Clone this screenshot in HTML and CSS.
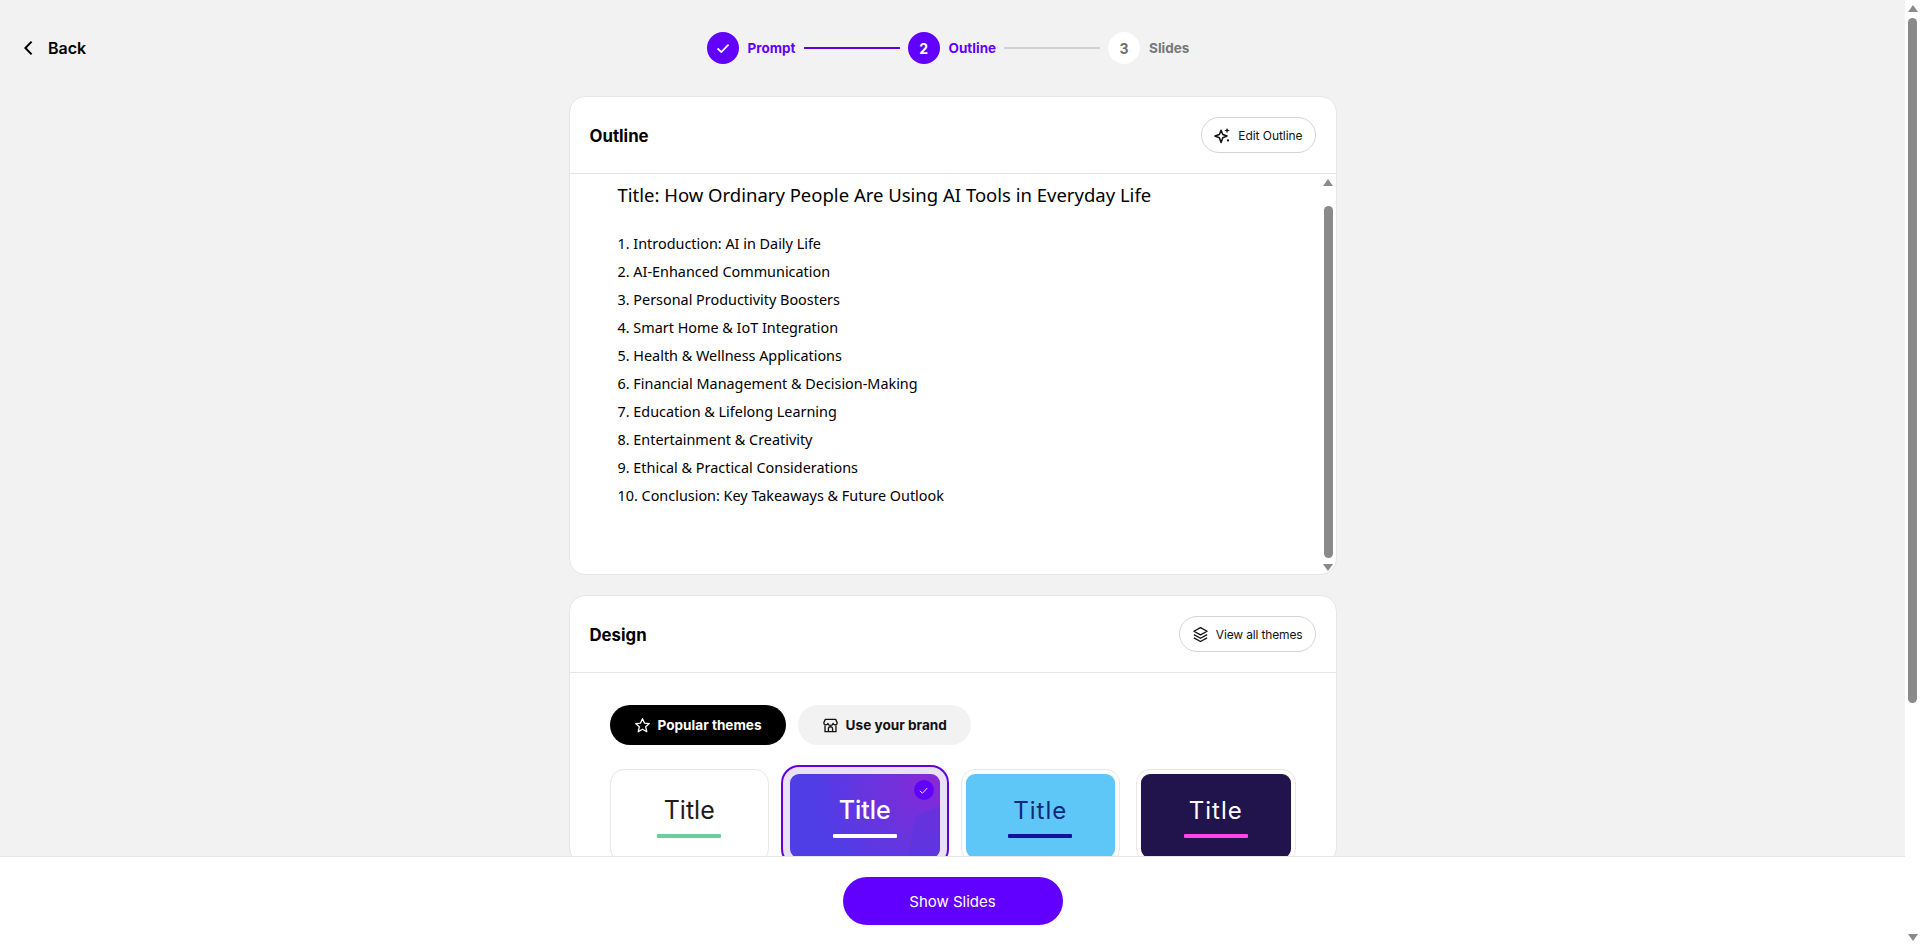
FILE: index.html
```html
<!DOCTYPE html>
<html lang="en">
<head>
<meta charset="utf-8">
<title>Outline</title>
<link rel="stylesheet" href="styles.css">
</head>
<body>
<div class="app">
  <div class="main">
    <div class="content">
      <header class="topbar">
        <a class="back">
          <svg class="back-icon" viewBox="0 0 12 16" width="12" height="16"><path d="M8.6 1.6 2.4 8l6.2 6.4" fill="none" stroke="#000" stroke-width="2"/></svg>
          <span>Back</span>
        </a>
        <nav class="stepper">
          <span class="step-dot done"><svg viewBox="0 0 16 16" width="16" height="16"><path d="M2.5 8.5 6.3 12 13.5 4.6" fill="none" stroke="#fff" stroke-width="1.7"/></svg></span>
          <span class="step-label active">Prompt</span>
          <span class="step-line active"></span>
          <span class="step-dot done">2</span>
          <span class="step-label active">Outline</span>
          <span class="step-line"></span>
          <span class="step-dot todo">3</span>
          <span class="step-label">Slides</span>
        </nav>
        <div></div>
      </header>

      <section class="card outline-card">
        <div class="card-head">
          <h2>Outline</h2>
          <button class="ghost-btn">
            <svg viewBox="0 0 18 18" width="17" height="17"><path d="M7.5 3.4 9.3 7.9 13.8 9.6 9.3 11.3 7.5 16.4 5.7 11.3 1 9.6 5.7 7.9Z" fill="none" stroke="#111" stroke-width="1.6" stroke-linejoin="round"/><path d="M13.8.8 14.6 3 16.8 3.8 14.6 4.6 13.8 6.8 13 4.6 10.8 3.8 13 3Z" fill="#111"/><circle cx="14.8" cy="14.2" r="1.2" fill="#111"/></svg>
            <span class="btn-wide">Edit Outline</span>
          </button>
        </div>
        <div class="outline-body">
          <div class="outline-text">
            <p class="outline-title">Title: How Ordinary People Are Using AI Tools in Everyday Life</p>
            <ol class="outline-list">
              <li>1. Introduction: AI in Daily Life</li>
              <li>2. AI-Enhanced Communication</li>
              <li>3. Personal Productivity Boosters</li>
              <li>4. Smart Home &amp; IoT Integration</li>
              <li>5. Health &amp; Wellness Applications</li>
              <li>6. Financial Management &amp; Decision-Making</li>
              <li>7. Education &amp; Lifelong Learning</li>
              <li>8. Entertainment &amp; Creativity</li>
              <li>9. Ethical &amp; Practical Considerations</li>
              <li>10. Conclusion: Key Takeaways &amp; Future Outlook</li>
            </ol>
          </div>
          <div class="sb sb-inner">
            <span class="sb-up"></span>
            <span class="sb-thumb"></span>
            <span class="sb-down"></span>
          </div>
        </div>
      </section>

      <section class="card design-card">
        <div class="card-head">
          <h2>Design</h2>
          <button class="ghost-btn">
            <svg viewBox="0 0 18 18" width="17" height="17"><path d="M9 1.8 16 5.6 9 9.4 2 5.6Z" fill="none" stroke="#111" stroke-width="1.4" stroke-linejoin="round"/><path d="M2 9.2 9 13 16 9.2M2 12.6 9 16.4 16 12.6" fill="none" stroke="#111" stroke-width="1.4" stroke-linejoin="round"/></svg>
            View all themes
          </button>
        </div>
        <div class="design-body">
          <div class="tabs">
            <button class="tab tab-on">
              <svg viewBox="0 0 18 18" width="17" height="17"><path d="M9 1.8 11.1 6.4 16.2 7 12.4 10.4 13.5 15.6 9 13 4.5 15.6 5.6 10.4 1.8 7 6.9 6.4Z" fill="none" stroke="#fff" stroke-width="1.4" stroke-linejoin="round"/></svg>
              Popular themes
            </button>
            <button class="tab">
              <svg viewBox="0 0 18 18" width="17" height="17"><path d="M3.5 2.5h11l1.6 3.6a2.2 2.2 0 0 1-4.3.7 2.9 2.9 0 0 1-5.6 0 2.2 2.2 0 0 1-4.3-.7Z" fill="none" stroke="#111" stroke-width="1.4" stroke-linejoin="round"/><path d="M3.2 9v6.5h11.6V9M6.8 15.5v-3a2.2 2.2 0 0 1 4.4 0v3" fill="none" stroke="#111" stroke-width="1.4"/></svg>
              Use your brand
            </button>
          </div>
          <div class="themes">
            <div class="theme">
              <div class="slide s-white"><span class="slide-title">Title</span><i class="slide-bar"></i></div>
            </div>
            <div class="theme theme-on">
              <div class="slide s-violet"><span class="slide-title">Title</span><i class="slide-bar"></i></div>
              <span class="check"><svg viewBox="0 0 12 12" width="11" height="11"><path d="M2 6.4 4.8 9 10 3.4" fill="none" stroke="#fff" stroke-width="1"/></svg></span>
            </div>
            <div class="theme">
              <div class="slide s-sky"><span class="slide-title">Title</span><i class="slide-bar"></i></div>
            </div>
            <div class="theme">
              <div class="slide s-night"><span class="slide-title">Title</span><i class="slide-bar"></i></div>
            </div>
          </div>
        </div>
      </section>
    </div>
    <footer class="footer">
      <button class="primary">Show Slides</button>
    </footer>
  </div>
  <div class="sb sb-page">
    <span class="sb-up"></span>
    <span class="sb-thumb"></span>
    <span class="sb-down"></span>
  </div>
</div>
</body>
</html>
```
FILE: styles.css
```css
* { box-sizing: border-box; }
html, body { margin: 0; height: 100%; overflow: hidden; }
body { font-family: Inter, "Liberation Sans", sans-serif; color: #000; background: #f2f2f2; }
button { font-family: inherit; cursor: pointer; }

.app { display: flex; height: 100vh; }
.main { flex: 1; min-width: 0; display: flex; flex-direction: column; }
.content { flex: 1; min-height: 0; overflow: hidden; display: flex; flex-direction: column; align-items: center; }

.topbar { width: 100%; height: 96px; flex: none; display: grid; grid-template-columns: 1fr auto 1fr; align-items: center; padding: 0 32px 0 23px; }
.back { display: flex; align-items: center; gap: 13px; font-size: 16px; font-weight: 600; padding-bottom: 1px; }
.back-icon { flex: none; }

.stepper { display: flex; align-items: center; }
.step-dot { width: 32px; height: 32px; border-radius: 50%; display: flex; align-items: center; justify-content: center; font-size: 14px; font-weight: 700; flex: none; }
.step-dot.done { background: #6200ff; color: #fff; }
.step-dot.todo { background: #fff; color: #6f6f6f; }
.step-label { margin-left: 9px; font-size: 13.5px; font-weight: 700; color: #777; }
.step-label.active { color: #6200ff; }
.step-line { width: 96px; height: 2px; margin: 0 8px; background: #d0d0d0; }
.step-line.active { background: #6200d8; }

.card { width: 768px; flex: none; background: #fff; border: 1px solid #e6e6e6; border-radius: 16px; }
.outline-card { height: 479px; display: flex; flex-direction: column; }
.design-card { margin-top: 20px; }
.card-head { height: 77px; flex: none; display: flex; align-items: center; justify-content: space-between; padding: 0 20px; border-bottom: 1px solid #e5e5e5; }
.card-head h2 { margin: 0; padding-top: 1px; font-size: 16.8px; font-weight: 700; }
.ghost-btn { height: 36px; padding: 0 12px; display: flex; align-items: center; gap: 7px; background: #fff; border: 1px solid #d4d4d4; border-radius: 18px; font-size: 12px; letter-spacing: -0.15px; color: #111; }
.btn-wide { letter-spacing: -0.05px; }

.outline-body { flex: 1; min-height: 0; display: flex; }
.outline-text { flex: 1; padding: 8px 0 0 48px; font-family: "Noto Sans", sans-serif; color: #000; }
.outline-title { margin: 0 0 22px; font-size: 18.5px; line-height: 26px; }
.outline-list { margin: 0; padding: 0; list-style: none; font-size: 14.4px; line-height: 28px; }

.sb { display: flex; flex-direction: column; align-items: center; flex: none; }
.sb-thumb { display: block; width: 9px; background: #8a8a8a; border-radius: 5px; flex: none; }
.sb-up, .sb-down { display: block; width: 0; height: 0; border-left: 5px solid transparent; border-right: 5px solid transparent; flex: none; }
.sb-up { border-bottom: 7px solid #8a8a8a; }
.sb-down { border-top: 7px solid #8a8a8a; }

.sb-inner { width: 15px; padding-top: 5px; }
.sb-inner .sb-thumb { height: 352px; margin: 20px 0 6px; }
.sb-page { width: 15px; background: #fff; padding-top: 5px; }
.sb-page .sb-thumb { height: 685px; margin: 6px 0 231px; }

.design-body { padding: 32px 40px 0; }
.tabs { display: flex; gap: 12px; }
.tab { height: 40px; padding: 0 24px; display: flex; align-items: center; gap: 7px; border: 0; border-radius: 20px; background: #f2f2f2; font-size: 13.6px; font-weight: 700; color: #111; }
.tab-on { background: #000; color: #fff; }

.themes { display: grid; grid-template-columns: repeat(4, 1fr); gap: 16px; margin-top: 24px; }
.theme { position: relative; padding: 4px; border: 1px solid #e8e8e8; border-radius: 14px; background: #fff; }
.theme-on { background: #e9e2f6; border-color: #e9e2f6; box-shadow: 0 0 0 2px #e9e2f6, 0 0 0 4px #6200d8; }
.slide { position: relative; overflow: hidden; height: 84px; border-radius: 9px; display: flex; flex-direction: column; align-items: center; padding-top: 22px; }
.slide-title { position: relative; font-size: 25px; line-height: 29px; }
.slide-bar { position: relative; display: block; width: 64px; height: 4px; margin-top: 9px; border-radius: 1px; }
.s-white { background: #fff; color: #1c1c1c; }
.s-white .slide-bar { background: #68cf9c; }
.s-violet { background: radial-gradient(circle at 100% 0, #8a28d4 0%, rgba(138, 40, 212, 0) 75%), #4f3de6; color: #fff; }
.s-violet::before { content: ""; position: absolute; inset: 0; background: #5a35e0; opacity: .55; clip-path: polygon(100% 38%, 84% 50%, 79% 100%, 100% 100%); }
.s-violet .slide-title { font-weight: 500; }
.s-violet .slide-bar { background: #fff; }
.s-sky { background: #5ec7f8; color: #14267a; }
.s-sky .slide-title { font-size: 24px; letter-spacing: 1px; }
.s-sky .slide-bar { background: #12129e; }
.s-night { background: #21134b; color: #fff; }
.s-night .slide-title { font-size: 24px; letter-spacing: 1px; }
.s-night .slide-bar { background: #ff44ec; }
.check { position: absolute; top: 10px; right: 10px; width: 20px; height: 20px; border-radius: 50%; background: #6200ff; display: flex; align-items: center; justify-content: center; }

.footer { height: 89px; flex: none; display: flex; align-items: center; justify-content: center; background: #fff; border-top: 1px solid #e5e5e5; }
.primary { width: 220px; height: 48px; border: 0; border-radius: 24px; background: #6200ff; color: #fff; font-size: 15px; }
```
